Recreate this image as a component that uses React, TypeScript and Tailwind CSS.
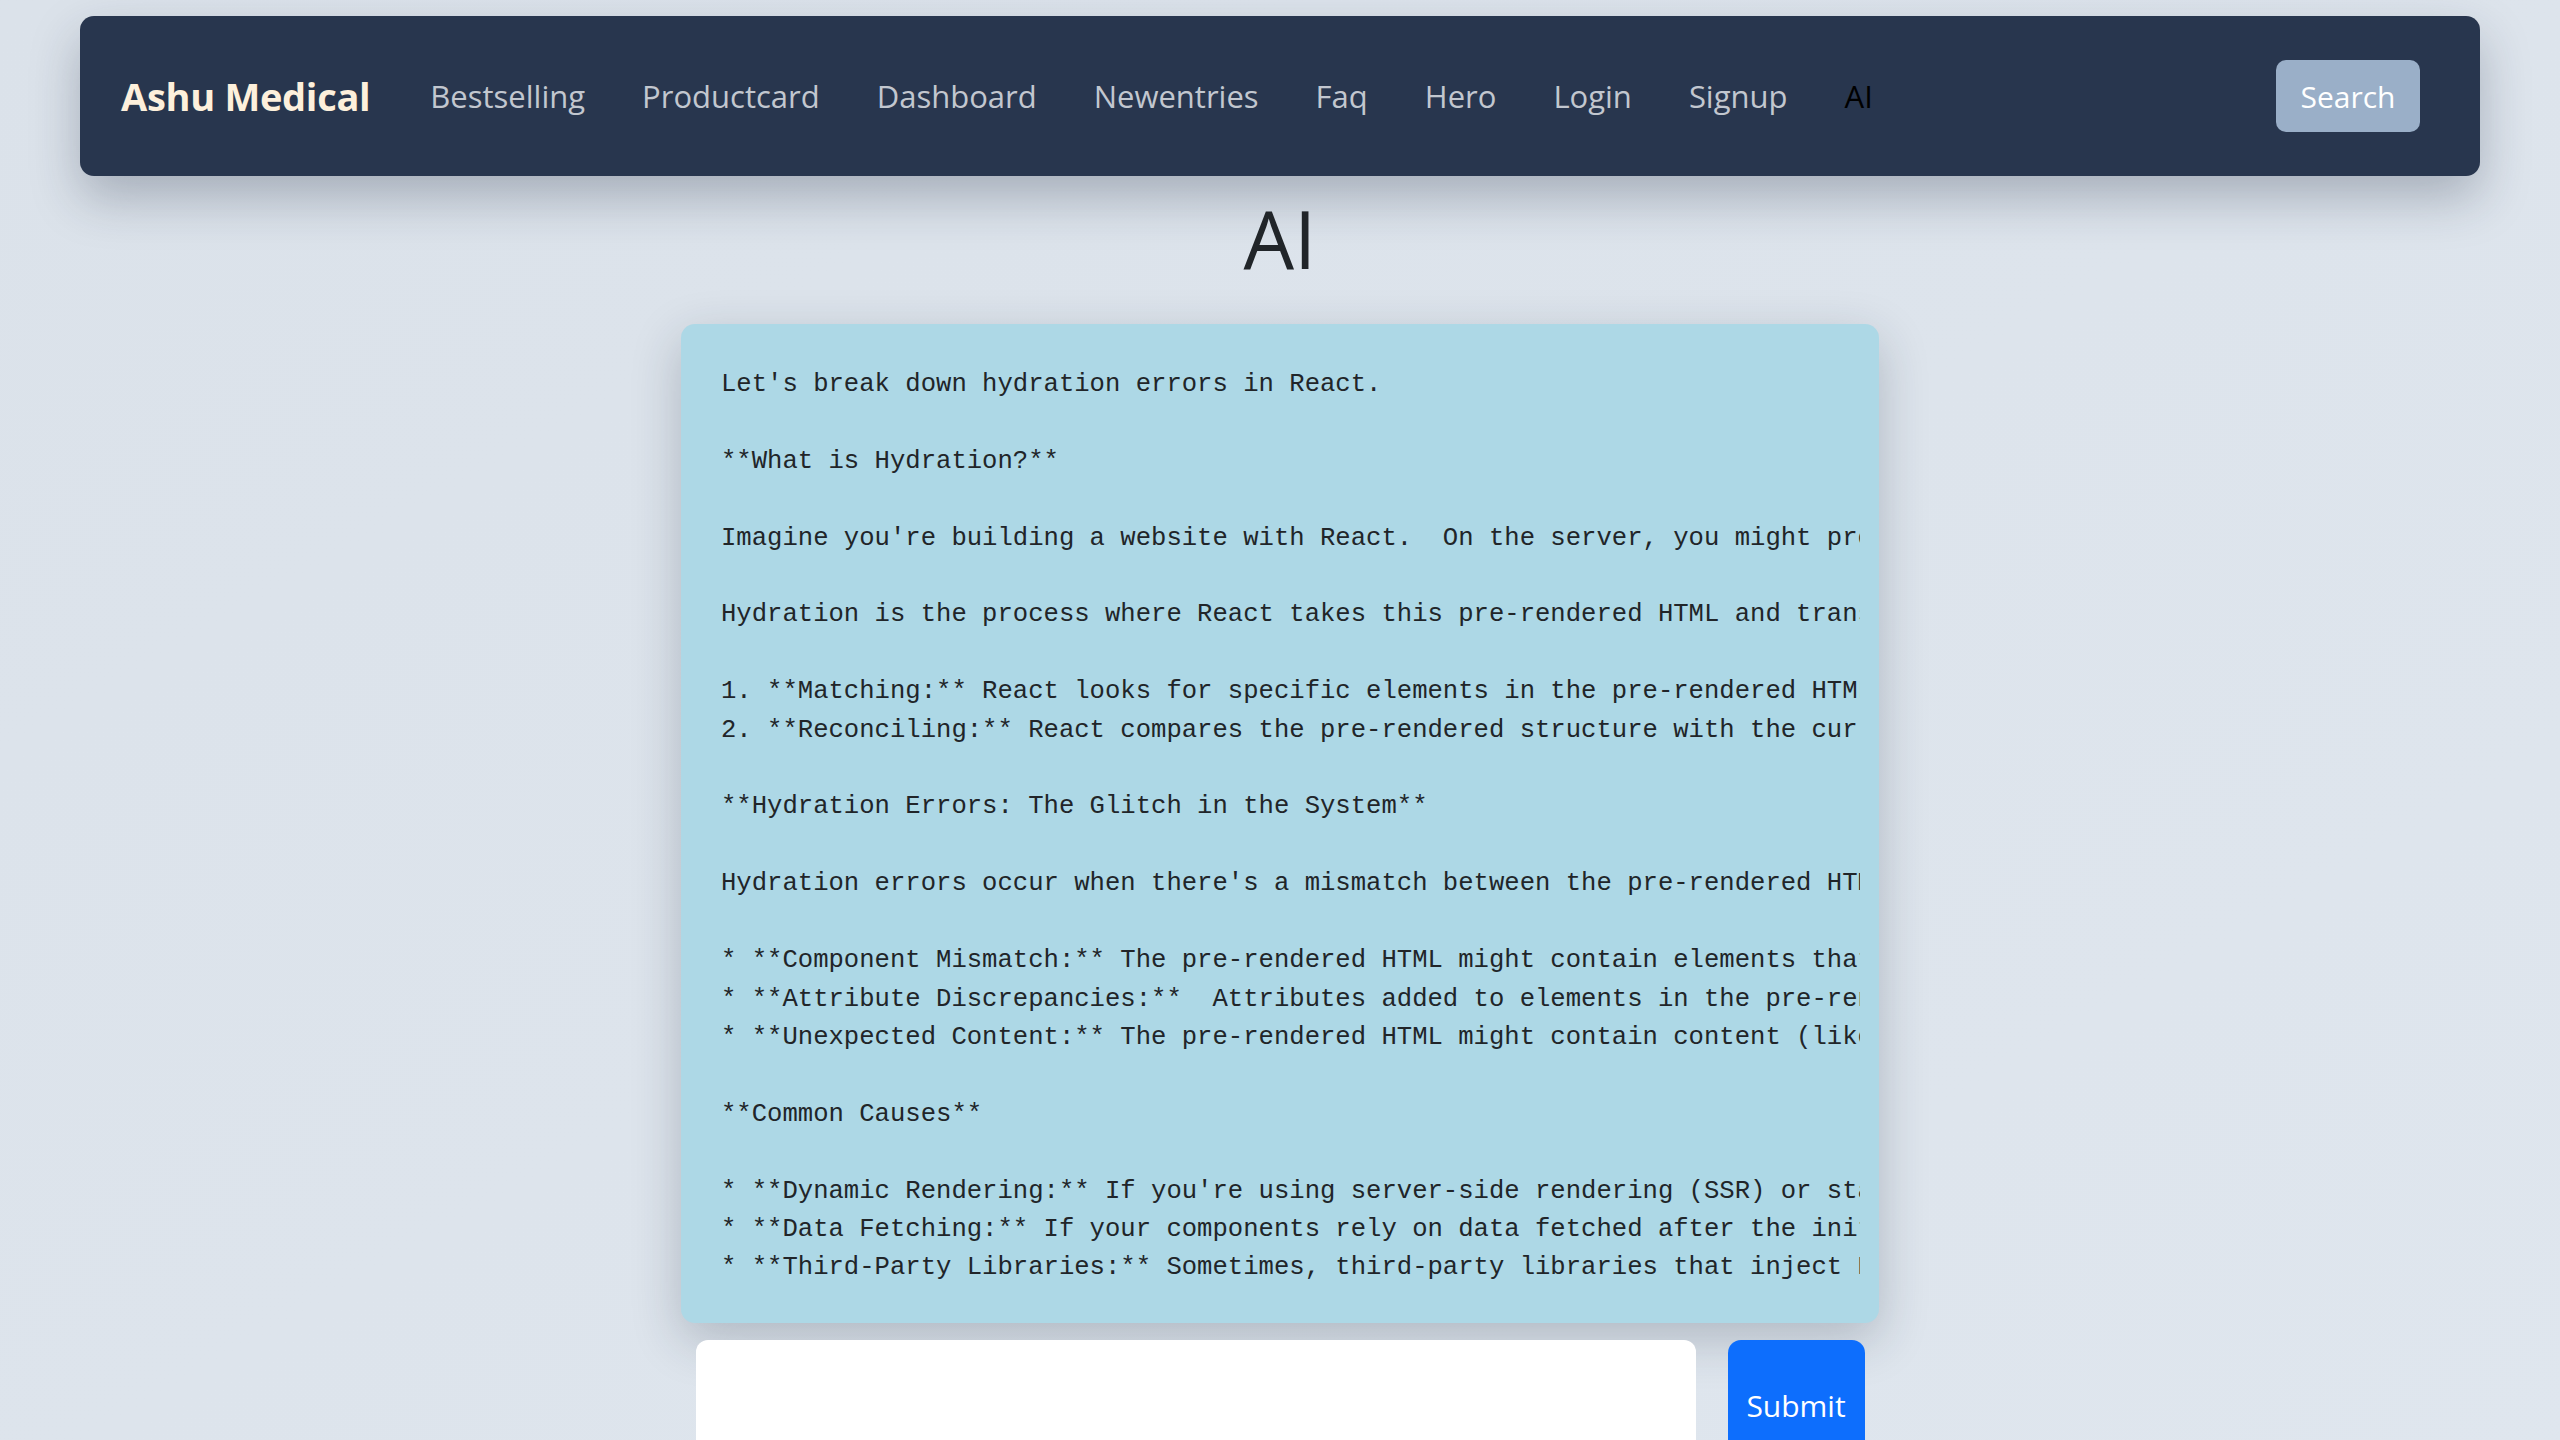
const NAV_LINKS = [
  'Bestselling',
  'Productcard',
  'Dashboard',
  'Newentries',
  'Faq',
  'Hero',
  'Login',
  'Signup',
];

// The model's answer, shown raw (markdown not rendered) in a <pre>.
const ANSWER = `Let's break down hydration errors in React.

**What is Hydration?**

Imagine you're building a website with React.  On the server, you might pre-render the initial HTML for faster page loads and better SEO.

Hydration is the process where React takes this pre-rendered HTML and transforms it into a fully interactive application on the client.

1. **Matching:** React looks for specific elements in the pre-rendered HTML that correspond to your components.
2. **Reconciling:** React compares the pre-rendered structure with the current component tree and attaches event listeners.

**Hydration Errors: The Glitch in the System**

Hydration errors occur when there's a mismatch between the pre-rendered HTML and what React expects to render on the client.

* **Component Mismatch:** The pre-rendered HTML might contain elements that don't exist in your component tree.
* **Attribute Discrepancies:**  Attributes added to elements in the pre-rendered HTML differ from the client render.
* **Unexpected Content:** The pre-rendered HTML might contain content (like timestamps) that changes between renders.

**Common Causes**

* **Dynamic Rendering:** If you're using server-side rendering (SSR) or static site generation (SSG), dynamic values can differ.
* **Data Fetching:** If your components rely on data fetched after the initial render, the markup may not match.
* **Third-Party Libraries:** Sometimes, third-party libraries that inject HTML into the DOM cause mismatches.`;

function Navbar() {
  return (
    <nav className="flex h-[160px] items-center rounded-[14px] bg-[#28364e] pl-[41px] pr-[60px] shadow-[0_22px_50px_rgba(30,40,60,0.28)]">
      <a className="text-[38px] font-bold tracking-[-0.3px] text-[#fdf0dc]">Ashu Medical</a>
      <ul className="ml-[60px] flex items-center gap-[57px] text-[31px] text-[#c2c7cf]">
        {NAV_LINKS.map((name) => (
          <li key={name}>
            <a>{name}</a>
          </li>
        ))}
        <li>
          <a className="text-black">AI</a>
        </li>
      </ul>
      <button className="ml-auto h-[72px] w-[144px] rounded-[10px] bg-[#9aafc8] text-[30px] text-white">
        Search
      </button>
    </nav>
  );
}

export default function App() {
  return (
    <div className="min-h-screen bg-gradient-to-br from-[#dbe2ea] to-[#dfe6ee] px-[80px] pt-[16px] font-['Open_Sans',sans-serif]">
      <Navbar />

      <h1 className="mt-[14px] text-center text-[80px] leading-[96px] font-normal text-[#212529]">AI</h1>

      {/* Response panel */}
      <div className="mx-auto mt-[38px] h-[999px] w-[1198px] overflow-hidden rounded-[14px] bg-[#add8e6] pt-[42px] pb-[36px] pl-[40px] pr-[19px] shadow-[0_16px_50px_rgba(30,40,60,0.24)]">
        <pre className="overflow-hidden font-['Liberation_Mono',monospace] text-[25.6px] leading-[38.4px] whitespace-pre text-[#212529]">
          {ANSWER}
        </pre>
      </div>

      {/* Prompt form */}
      <form className="mt-[17px] flex justify-center gap-[32px]">
        <textarea className="h-[130px] w-[1000px] resize-none rounded-[12px] bg-white" />
        <button
          type="button"
          className="h-[130px] w-[137px] rounded-[13px] bg-[#0d6efd] text-[30px] text-white"
        >
          Submit
        </button>
      </form>
    </div>
  );
}
